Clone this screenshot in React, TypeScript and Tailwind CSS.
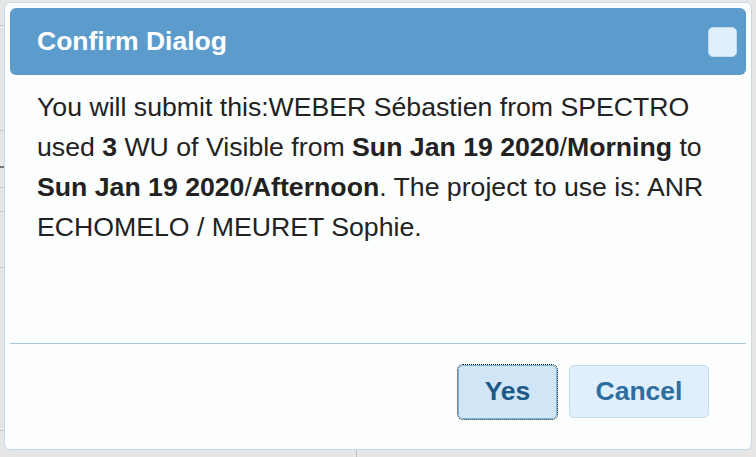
import React from 'react';

function BackdropLines() {
  // faint bits of the table that sits behind the modal
  const rows = [25, 130, 187, 211, 267, 430];
  return (
    <>
      {rows.map(y => (
        <div key={y} className="absolute left-0 w-[4px] h-px bg-[#c8c8c8]" style={{ top: y }} />
      ))}
      <div className="absolute left-0 top-[166px] w-[4px] h-[2px] bg-[#777]" />
      <div className="absolute left-[356px] top-[450px] w-px h-[7px] bg-[#bcbcbc]" />
    </>
  );
}

export default function App() {
  return (
    <div
      className="relative w-[756px] h-[457px] overflow-hidden bg-[#e6e6e6]"
      style={{ fontFamily: '"Liberation Sans", Arial, sans-serif' }}
    >
      <BackdropLines />

      {/* Dialog */}
      <div className="absolute left-[4px] top-[2px] w-[748px] h-[448px] rounded-[6px] border border-[#c5dbec] bg-[#fcfdfd] p-[5px] flex flex-col">
        {/* Title bar */}
        <div className="h-[67px] shrink-0 rounded-[6px] bg-[#5c9ccc] flex items-center justify-between pl-[27px] pr-[9px]">
          <span className="text-white font-bold text-[26.5px] leading-none">Confirm Dialog</span>
          <button className="w-[29px] h-[30px] rounded-[5px] bg-[#dfeffc] border border-[#c5dbec]" />
        </div>

        {/* Body */}
        <div className="h-[268px] shrink-0 px-[27px] pt-[12px] text-[26.67px] leading-[40px] text-[#222]">
          You will submit this:WEBER Sébastien from SPECTRO used <b>3</b> WU of Visible from{' '}
          <b>Sun Jan 19 2020</b>/<b>Morning</b> to <b>Sun Jan 19 2020</b>/<b>Afternoon</b>. The project to use
          is: ANR ECHOMELO / MEURET Sophie.
        </div>

        {/* Button pane */}
        <div className="flex-1 border-t border-[#a6c9e2] flex justify-end items-start pt-[21px] pr-[37px] gap-[12px]">
          <button className="w-[99px] h-[54px] rounded-[5px] bg-[#d0e5f5] border border-[#79b7e7] text-[#1d5987] font-bold text-[26.5px] outline-1 outline-dotted outline-black">
            Yes
          </button>
          <button className="w-[140px] h-[53px] rounded-[5px] bg-[#dfeffc] border border-[#c5dbec] text-[#2e6e9e] font-bold text-[26.5px]">
            Cancel
          </button>
        </div>
      </div>
    </div>
  );
}
